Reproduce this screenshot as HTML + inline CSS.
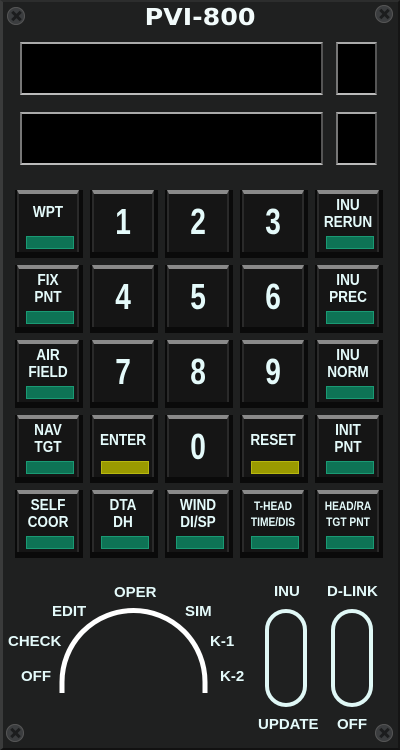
<!DOCTYPE html>
<html><head><style>
body{margin:0;width:400px;height:750px;background:#1f2020;overflow:hidden;font-family:"Liberation Sans",sans-serif;position:relative;color:#e4fafa}
.frame{position:absolute;left:0;top:0;width:400px;height:750px;box-sizing:border-box;border-left:3px solid #3a3b3b;border-top:2px solid #2c2d2d;border-right:2px solid #151515;border-bottom:2px solid #111}
.title{position:absolute;left:0;width:400px;top:5px;text-align:center;font-family:"DejaVu Sans","Liberation Sans",sans-serif;font-weight:bold;font-size:23px;color:#f2fbfb;transform:scaleX(1.1)}
.disp{position:absolute;background:#000;border:2px solid #777;border-top-color:#aaa;border-bottom-color:#bbb;border-right-color:#555;box-sizing:border-box}
.screw{position:absolute;width:18px;height:18px;border-radius:50%;background:#3b3d3f;box-shadow:inset 0 0 0 1px #555}
.screw:before,.screw:after{content:"";position:absolute;left:8px;top:3px;width:3px;height:12px;background:#1c1d1e;transform:rotate(45deg)}
.screw:after{transform:rotate(-45deg)}
.btn{position:absolute;width:68px;height:68px;background:#0a0a0a}
.btn .f{position:absolute;left:2px;top:0;width:62px;height:62px;background:#151515;border-top:4px solid #8a8a8a;box-sizing:border-box;border-left:2px solid #2a2a2a;border-right:2px solid #2a2a2a}
.lbl{position:absolute;left:2px;width:62px;text-align:center;font-weight:bold;font-size:16px;line-height:17px;transform:scaleX(0.85)}
.dig{position:absolute;left:2px;width:62px;top:12px;text-align:center;font-weight:bold;font-size:36px;line-height:40px;transform:scaleX(0.78)}
.bar{position:absolute;left:11px;top:46px;width:48px;height:13px;background:#0e7355;box-shadow:inset 0 0 0 1px #1a9a74}
.bar.y{background:#9a9a00;box-shadow:inset 0 0 0 1px #b8b810}
.t{position:absolute;font-weight:bold;font-size:15px;font-family:"Liberation Sans",sans-serif}
</style></head><body>
<div class="frame"></div>
<div class="title">PVI-800</div>
<div class="screw" style="left:7px;top:7px"></div>
<div class="screw" style="left:375px;top:5px"></div>
<div class="screw" style="left:6px;top:724px"></div>
<div class="screw" style="left:375px;top:724px"></div>
<div class="disp" style="left:20px;top:42px;width:303px;height:53px"></div>
<div class="disp" style="left:336px;top:42px;width:41px;height:53px"></div>
<div class="disp" style="left:20px;top:112px;width:303px;height:53px"></div>
<div class="disp" style="left:336px;top:112px;width:41px;height:53px"></div>

<div class="btn" style="left:15px;top:190px"><div class="f"></div><div class="lbl" style="top:14px">WPT</div><div class="bar"></div></div>
<div class="btn" style="left:90px;top:190px"><div class="f"></div><div class="dig">1</div></div>
<div class="btn" style="left:165px;top:190px"><div class="f"></div><div class="dig">2</div></div>
<div class="btn" style="left:240px;top:190px"><div class="f"></div><div class="dig">3</div></div>
<div class="btn" style="left:315px;top:190px"><div class="f"></div><div class="lbl" style="top:7px">INU<br>RERUN</div><div class="bar"></div></div>

<div class="btn" style="left:15px;top:265px"><div class="f"></div><div class="lbl" style="top:7px">FIX<br>PNT</div><div class="bar"></div></div>
<div class="btn" style="left:90px;top:265px"><div class="f"></div><div class="dig">4</div></div>
<div class="btn" style="left:165px;top:265px"><div class="f"></div><div class="dig">5</div></div>
<div class="btn" style="left:240px;top:265px"><div class="f"></div><div class="dig">6</div></div>
<div class="btn" style="left:315px;top:265px"><div class="f"></div><div class="lbl" style="top:7px">INU<br>PREC</div><div class="bar"></div></div>

<div class="btn" style="left:15px;top:340px"><div class="f"></div><div class="lbl" style="top:7px">AIR<br>FIELD</div><div class="bar"></div></div>
<div class="btn" style="left:90px;top:340px"><div class="f"></div><div class="dig">7</div></div>
<div class="btn" style="left:165px;top:340px"><div class="f"></div><div class="dig">8</div></div>
<div class="btn" style="left:240px;top:340px"><div class="f"></div><div class="dig">9</div></div>
<div class="btn" style="left:315px;top:340px"><div class="f"></div><div class="lbl" style="top:7px">INU<br>NORM</div><div class="bar"></div></div>

<div class="btn" style="left:15px;top:415px"><div class="f"></div><div class="lbl" style="top:7px">NAV<br>TGT</div><div class="bar"></div></div>
<div class="btn" style="left:90px;top:415px"><div class="f"></div><div class="lbl" style="top:17px">ENTER</div><div class="bar y"></div></div>
<div class="btn" style="left:165px;top:415px"><div class="f"></div><div class="dig">0</div></div>
<div class="btn" style="left:240px;top:415px"><div class="f"></div><div class="lbl" style="top:17px">RESET</div><div class="bar y"></div></div>
<div class="btn" style="left:315px;top:415px"><div class="f"></div><div class="lbl" style="top:7px">INIT<br>PNT</div><div class="bar"></div></div>

<div class="btn" style="left:15px;top:490px"><div class="f"></div><div class="lbl" style="top:7px">SELF<br>COOR</div><div class="bar"></div></div>
<div class="btn" style="left:90px;top:490px"><div class="f"></div><div class="lbl" style="top:7px">DTA<br>DH</div><div class="bar"></div></div>
<div class="btn" style="left:165px;top:490px"><div class="f"></div><div class="lbl" style="top:7px">WIND<br>DI/SP</div><div class="bar"></div></div>
<div class="btn" style="left:240px;top:490px"><div class="f"></div><div class="lbl" style="top:8px;font-size:12px;line-height:16px">T-HEAD<br>TIME/DIS</div><div class="bar"></div></div>
<div class="btn" style="left:315px;top:490px"><div class="f"></div><div class="lbl" style="top:8px;font-size:12px;line-height:16px">HEAD/RA<br>TGT PNT</div><div class="bar"></div></div>

<svg style="position:absolute;left:0;top:0" width="400" height="750">
<path d="M62 693 L62 682 A71.5 71.5 0 0 1 205 682 L205 693" fill="none" stroke="#fff" stroke-width="5"/>
<rect x="267" y="611" width="38" height="94" rx="19" fill="none" stroke="#e0f8f6" stroke-width="4"/>
<rect x="333" y="611" width="38" height="94" rx="19" fill="none" stroke="#e0f8f6" stroke-width="4"/>
</svg>
<div class="t" style="left:114px;top:584px">OPER</div>
<div class="t" style="left:52px;top:603px">EDIT</div>
<div class="t" style="left:185px;top:603px">SIM</div>
<div class="t" style="left:8px;top:633px">CHECK</div>
<div class="t" style="left:210px;top:633px">K-1</div>
<div class="t" style="left:21px;top:668px">OFF</div>
<div class="t" style="left:220px;top:668px">K-2</div>
<div class="t" style="left:274px;top:583px">INU</div>
<div class="t" style="left:327px;top:583px">D-LINK</div>
<div class="t" style="left:258px;top:716px">UPDATE</div>
<div class="t" style="left:337px;top:716px">OFF</div>
</body></html>
